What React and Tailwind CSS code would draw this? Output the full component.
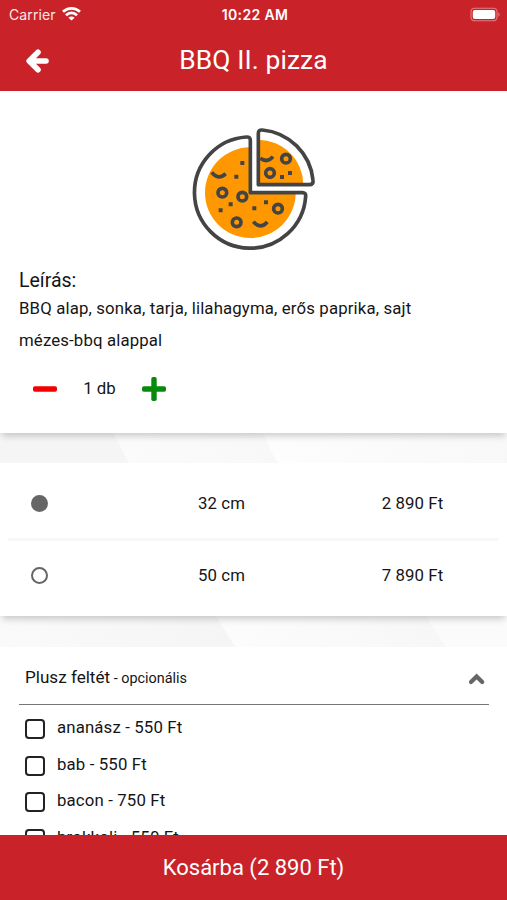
import { useState } from "react"

const sizes = [
  { id: 1, name: "32 cm", price: "2 890 Ft" },
  { id: 2, name: "50 cm", price: "7 890 Ft" },
]

const toppings = ["ananász - 550 Ft", "bab - 550 Ft", "bacon - 750 Ft", "brokkoli - 550 Ft"]

function StatusBar() {
  return (
    <div className="flex h-[28px] items-center justify-between pl-[9px] pr-[6px] font-[Inter]">
      <div className="flex flex-1 items-center gap-[6px]">
        <span className="text-[14px] tracking-[0.1px] opacity-90">Carrier</span>
        <svg width="19" height="14" viewBox="0 0 19 14" fill="none" stroke="white" strokeWidth="2.7">
          <path d="M1 4.8a12.2 12.2 0 0 1 17 0" />
          <path d="M4 8.2a7.8 7.8 0 0 1 11 0" />
          <path d="M9.5 13.6 6.4 10.7a4.4 4.4 0 0 1 6.2 0z" fill="white" stroke="none" />
        </svg>
      </div>
      <span className="text-[14px] font-semibold tracking-[0.35px]">10:22 AM</span>
      <div className="flex flex-1 justify-end">
        <svg width="31" height="15" viewBox="0 0 31 15">
          <rect x="1" y="1.2" width="26" height="12.6" rx="3.6" fill="none" stroke="#de7f83" strokeWidth="1.1" />
          <rect x="2.8" y="3" width="22.4" height="9" rx="2" fill="white" />
          <path d="M28.3 5.3c1.8.7 1.8 3.7 0 4.4z" fill="#de7f83" />
        </svg>
      </div>
    </div>
  )
}

function PizzaIcon() {
  return (
    <svg width="150" height="145" viewBox="0 0 450 435" fill="none" stroke="#444" strokeWidth="11" strokeLinejoin="round" strokeLinecap="round">
      <path d="M211 97A136 136 0 1 0 347 233H211Z" fill="#ff9800" stroke="none" />
      <path d="M235 74A136 136 0 0 1 370 209H235Z" fill="#ff9800" stroke="none" />
      <path d="M211 233V76Q211 65 199 66A167 167 0 1 0 377 244Q378 233 367 233Z" />
      <path d="M235 209V55Q235 44 247 45A168 168 0 0 1 399 195Q401 209 388 209Z" />
      <g strokeWidth="11">
        <circle cx="127" cy="233" r="13" />
        <circle cx="187" cy="245" r="13" />
        <circle cx="294" cy="281" r="13" />
        <circle cx="170" cy="322" r="13" />
        <circle cx="318" cy="131" r="13" />
        <circle cx="270" cy="174" r="13" />
      </g>
      <path d="M95 172Q116 197 137 176M220 320Q241 345 262 321M241 130Q262 145 279 125" strokeLinecap="butt" strokeWidth="11" />
      <path d="M181 138h12v12h-12zM163 179h12v12h-12zM146 262h12v12h-12zM116 280h12v12h-12zM217 274h12v12h-12zM252 256h12v12h-12zM300 180h12v12h-12zM324 168h12v12h-12z" fill="#444" stroke="none" />
    </svg>
  )
}

export default function App() {
  const [count, setCount] = useState(1)
  const [size, setSize] = useState(1)
  const [open, setOpen] = useState(true)
  const [checked, setChecked] = useState([])

  const toggle = (name) => {
    setChecked(checked.includes(name) ? checked.filter((t) => t !== name) : [...checked, name])
  }

  const selected = sizes.find((s) => s.id === size)

  return (
    <div className="flex h-[900px] w-full flex-col overflow-hidden bg-[#f8f8f8] font-[Roboto,sans-serif] text-[16.8px] text-[#151515]">
      <header className="h-[91px] shrink-0 bg-[#c92329] text-white">
        <StatusBar />
        <div className="grid h-[66px] grid-cols-[73px_1fr_73px] items-center">
          <button className="flex justify-center">
            <svg width="24" height="26" viewBox="0 0 24 26" fill="none" stroke="white" strokeWidth="5.6">
              <path d="M13 4.2 4.2 13l8.8 8.8" strokeLinecap="round" strokeLinejoin="round" />
              <path d="M5 13h16" strokeLinecap="round" />
              <path d="M5 13l6-6v12z" fill="white" stroke="none" />
            </svg>
          </button>
          <h1 className="text-center text-[26.4px] tracking-[0.1px]">BBQ II. pizza</h1>
        </div>
      </header>

      <main className="flex min-h-0 flex-1 flex-col overflow-hidden">
        <section className="relative z-10 h-[342px] shrink-0 bg-white pt-[24px] shadow-[0_5px_7px_-2px_rgba(0,0,0,0.2)]">
          <div className="flex justify-center pl-[3px]">
            <PizzaIcon />
          </div>
          <div className="px-[19px] pt-[9px]">
            <h2 className="text-[19.5px] leading-6">Leírás:</h2>
            <p className="-mt-[1.5px] text-[16.8px] leading-[32.5px] tracking-[0.14px]">
              BBQ alap, sonka, tarja, lilahagyma, erős paprika, sajt
              <br />
              mézes-bbq alappal
            </p>
          </div>
          <div className="flex items-center pl-[33px] pt-[19px]">
            <button onClick={() => setCount(Math.max(1, count - 1))}>
              <svg width="24" height="26" viewBox="0 0 24 26">
                <rect y="10.3" width="24" height="5.4" rx="1.8" fill="#f40000" />
              </svg>
            </button>
            <span className="w-[85px] text-center">{count} db</span>
            <button onClick={() => setCount(count + 1)}>
              <svg width="24" height="26" viewBox="0 0 24 26" fill="#078a0b">
                <rect y="10.3" width="24" height="5.4" rx="1.8" />
                <rect x="9.3" y="1" width="5.4" height="24" rx="1.8" />
              </svg>
            </button>
          </div>
        </section>

        <div className="h-[30px] shrink-0 bg-[linear-gradient(63deg,#f5f5f5_24.5%,#fbfbfb_24.8%,#f8f8f8_53%,#fdfdfd_53.3%,#f8f8f8)]" />

        <section className="relative z-10 h-[153px] shrink-0 bg-white px-[8px] shadow-[0_5px_7px_-2px_rgba(0,0,0,0.2)]">
          {sizes.map((s, i) => (
            <div
              key={s.id}
              onClick={() => setSize(s.id)}
              className={
                i === 0
                  ? "grid h-[78px] grid-cols-[118px_191px_191px] items-center border-b-[3px] border-[#f8f8f8] pt-[6px]"
                  : "grid h-[69px] grid-cols-[118px_191px_191px] items-center"
              }
            >
              <span
                className={
                  size === s.id
                    ? "ml-[23px] size-[17px] rounded-full bg-[#666]"
                    : "ml-[23px] size-[17px] rounded-full border-[2.5px] border-[#666]"
                }
              />
              <span className="text-center tracking-[0.08px]">{s.name}</span>
              <span className="text-center tracking-[0.08px]">{s.price}</span>
            </div>
          ))}
        </section>

        <div className="h-[31px] shrink-0 bg-[linear-gradient(58deg,#fafafa,#f5f5f5_44.5%,#fcfcfc_44.9%,#f7f7f7_84.5%,#fbfbfb_84.9%)]" />

        <section className="flex-1 bg-white px-[19px] pr-[18px]">
          <div
            onClick={() => setOpen(!open)}
            className="flex h-[58px] items-center justify-between border-b border-[#777] pb-[1px] pl-[6px] pt-[6px]"
          >
            <p className="text-[17.1px]">
              Plusz feltét<span className="text-[14.4px]"> - opcionális</span>
            </p>
            <svg width="24" height="16" viewBox="0 0 24 16" fill="none" stroke="#666" strokeWidth="4.2" className={open ? "" : "rotate-180"}>
              <path d="M6 12 11.6 6.4 17.2 12" strokeLinecap="round" />
            </svg>
          </div>
          {open && (
            <div className="pl-[6px] pt-[5px]">
              {toppings.map((name) => (
                <div key={name} onClick={() => toggle(name)} className="flex h-[36.6px] items-center">
                  <span
                    className={
                      checked.includes(name)
                        ? "mt-[2px] size-[20px] rounded-[4px] border-2 border-[#222] bg-[#666]"
                        : "mt-[2px] size-[20px] rounded-[4px] border-2 border-[#222]"
                    }
                  />
                  <span className="-mt-[1px] ml-[12px] tracking-[0.14px]">{name}</span>
                </div>
              ))}
            </div>
          )}
        </section>
      </main>

      <button className="h-[65px] shrink-0 bg-[#c92329] text-center text-[22px] text-white">
        Kosárba ({selected.price})
      </button>
    </div>
  )
}
